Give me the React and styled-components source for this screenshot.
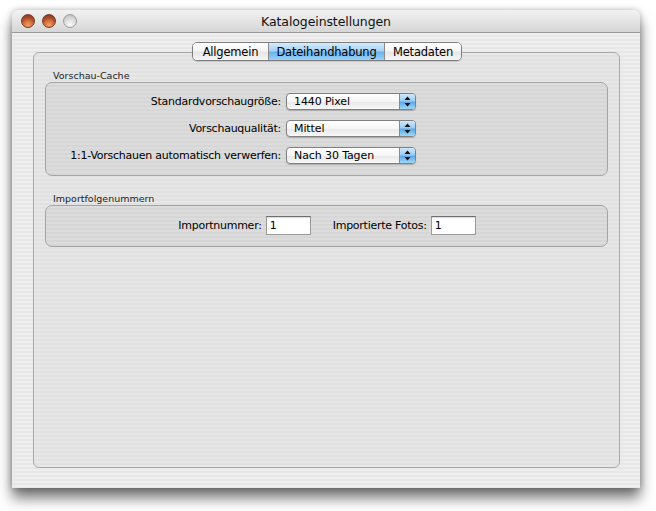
import React from "react";
import styled, { createGlobalStyle } from "styled-components";

const GlobalStyle = createGlobalStyle`
  html, body {
    margin: 0;
    padding: 0;
    background: #ffffff;
  }
  body {
    font-family: "DejaVu Sans", "Liberation Sans", sans-serif;
    color: #000;
  }
`;

const tabs = [
  { label: "Allgemein", width: 75 },
  { label: "Dateihandhabung", width: 116, active: true },
  { label: "Metadaten", width: 77 },
];

const previewRows = [
  { label: "Standardvorschaugröße:", value: "1440 Pixel" },
  { label: "Vorschauqualität:", value: "Mittel" },
  { label: "1:1-Vorschauen automatisch verwerfen:", value: "Nach 30 Tagen" },
];

const ArrowIcon = () => (
  <svg width="7" height="11" viewBox="0 0 7 11">
    <path d="M3.5 0.5 L6.5 4 L0.5 4 Z" fill="#111" />
    <path d="M3.5 10.5 L6.5 7 L0.5 7 Z" fill="#111" />
  </svg>
);

export default function App() {
  return (
    <>
      <GlobalStyle />
      <Page>
        <Window>
          <TitleBar>
            <Lights>
              <Light color="copper" />
              <Light color="copper" />
              <Light color="gray" />
            </Lights>
            <Title>Katalogeinstellungen</Title>
          </TitleBar>
          <Body>
            <TabView>
              <TabRow>
                <Segmented>
                  {tabs.map((t) => (
                    <Segment key={t.label} $w={t.width} $active={t.active}>
                      {t.label}
                    </Segment>
                  ))}
                </Segmented>
              </TabRow>
              <TabBox>
                <GroupLabel>Vorschau-Cache</GroupLabel>
                <GroupBox>
                  <FormGrid>
                    {previewRows.map((r) => (
                      <React.Fragment key={r.label}>
                        <FieldLabel>{r.label}</FieldLabel>
                        <Popup>
                          <PopupText>{r.value}</PopupText>
                          <PopupArrow>
                            <ArrowIcon />
                          </PopupArrow>
                        </Popup>
                      </React.Fragment>
                    ))}
                  </FormGrid>
                </GroupBox>

                <GroupLabel $second>Importfolgenummern</GroupLabel>
                <GroupBox>
                  <InlineRow>
                    <InlineField>
                      <FieldLabel>Importnummer:</FieldLabel>
                      <TextField>1</TextField>
                    </InlineField>
                    <InlineField>
                      <FieldLabel>Importierte Fotos:</FieldLabel>
                      <TextField>1</TextField>
                    </InlineField>
                  </InlineRow>
                </GroupBox>
              </TabBox>
            </TabView>
          </Body>
        </Window>
      </Page>
    </>
  );
}

const Page = styled.div`
  width: 656px;
  height: 511px;
  padding: 10px 0 0 12px;
  box-sizing: border-box;
`;

const Window = styled.div`
  width: 628px;
  height: 478px;
  border-radius: 6px 6px 0 0;
  background: #ededed;
  box-shadow: 0 10px 14px rgba(0, 0, 0, 0.55), 0 0 6px rgba(0, 0, 0, 0.25);
  display: flex;
  flex-direction: column;
  overflow: hidden;
`;

const TitleBar = styled.div`
  height: 22px;
  flex: none;
  position: relative;
  display: flex;
  align-items: center;
  justify-content: center;
  background: linear-gradient(#f2f2f2, #e4e4e4 50%, #d6d6d6);
  border-bottom: 1px solid #9a9a9a;
  border-radius: 6px 6px 0 0;
`;

const Lights = styled.div`
  position: absolute;
  left: 9px;
  top: 4px;
  display: flex;
  gap: 7px;
`;

const Light = styled.div`
  width: 14px;
  height: 14px;
  border-radius: 50%;
  box-sizing: border-box;
  border: 1px solid ${(p) => (p.color === "copper" ? "#7a3a22" : "#9c9c9c")};
  background: ${(p) =>
    p.color === "copper"
      ? "radial-gradient(circle at 50% 85%, #f2a06a 0%, #d7743f 35%, #a44a2a 65%, #7c3522 100%)"
      : "radial-gradient(circle at 50% 80%, #fafafa 0%, #dcdcdc 50%, #b8b8b8 100%)"};
`;

const Title = styled.div`
  font-family: "DejaVu Sans", sans-serif;
  font-size: 12.5px;
  color: #111;
  letter-spacing: -0.1px;
`;

const Body = styled.div`
  flex: 1;
  padding: 9px 20px 20px 21px;
  background: repeating-linear-gradient(
    to bottom,
    #eeeeee 0px,
    #eeeeee 2px,
    #e7e7e7 2px,
    #e7e7e7 4px
  );
  display: flex;
  flex-direction: column;
`;

const TabView = styled.div`
  flex: 1;
  display: flex;
  flex-direction: column;
`;

const TabRow = styled.div`
  display: flex;
  justify-content: center;
  position: relative;
  z-index: 1;
  padding-left: 1px;
`;

const Segmented = styled.div`
  display: flex;
  height: 17px;
  border: 1px solid #7e7e7e;
  border-radius: 5px;
  overflow: hidden;
  box-shadow: 0 1px 1px rgba(0, 0, 0, 0.15);
`;

const Segment = styled.div`
  width: ${(p) => p.$w}px;
  display: flex;
  align-items: center;
  justify-content: center;
  font-size: 11.5px;
  letter-spacing: -0.2px;
  color: #000;
  box-sizing: border-box;
  border-left: 1px solid #8a8a8a;
  &:first-child {
    border-left: none;
  }
  background: ${(p) =>
    p.$active
      ? "linear-gradient(#d3ebfc, #a7d3f6 45%, #6bb3ec 55%, #9ad3f8)"
      : "linear-gradient(#ffffff, #f4f4f4 45%, #e6e6e6 55%, #f6f6f6)"};
`;

const TabBox = styled.div`
  flex: 1;
  margin-top: -9px;
  padding: 17px 11px 0 11px;
  border: 1px solid #a9a9a9;
  border-radius: 6px;
  background: repeating-linear-gradient(
    to bottom,
    #e7e7e7 0px,
    #e7e7e7 2px,
    #e1e1e1 2px,
    #e1e1e1 4px
  );
`;

const GroupLabel = styled.div`
  font-size: 9.5px;
  color: #222;
  padding-left: 8px;
  height: 12px;
  line-height: 12px;
  margin-top: ${(p) => (p.$second ? "17px" : "0")};
`;

const GroupBox = styled.div`
  border: 1px solid #a4a4a4;
  border-radius: 7px;
  padding: 10px 0 11px;
  background: repeating-linear-gradient(
    to bottom,
    #dcdcdc 0px,
    #dcdcdc 2px,
    #d6d6d6 2px,
    #d6d6d6 4px
  );
`;

const FormGrid = styled.div`
  display: grid;
  grid-template-columns: 235px 130px;
  column-gap: 5px;
  row-gap: 10px;
  align-items: center;
`;

const FieldLabel = styled.div`
  font-size: 11px;
  letter-spacing: -0.25px;
  text-align: right;
  white-space: nowrap;
  color: #000;
`;

const Popup = styled.div`
  height: 17px;
  display: flex;
  box-sizing: border-box;
  border: 1px solid #808080;
  border-radius: 4px;
  overflow: hidden;
  background: linear-gradient(#ffffff, #f6f6f6 50%, #e9e9e9 55%, #f8f8f8);
  box-shadow: 0 1px 1px rgba(0, 0, 0, 0.2);
`;

const PopupText = styled.div`
  flex: 1;
  font-size: 11px;
  letter-spacing: -0.1px;
  padding-left: 7px;
  display: flex;
  align-items: center;
`;

const PopupArrow = styled.div`
  width: 15px;
  display: flex;
  align-items: center;
  justify-content: center;
  border-left: 1px solid #6f8fab;
  background: linear-gradient(#cfe8fb, #9ccdf5 45%, #5fa9e6 55%, #9fd8fb);
`;

const InlineRow = styled.div`
  display: flex;
  justify-content: center;
  gap: 22px;
  padding-left: 1px;
`;

const InlineField = styled.div`
  display: flex;
  align-items: center;
  gap: 4px;
`;

const TextField = styled.div`
  width: 45px;
  height: 19px;
  box-sizing: border-box;
  background: #fff;
  border: 1px solid #9a9a9a;
  border-top-color: #6e6e6e;
  box-shadow: inset 0 1px 1px rgba(0, 0, 0, 0.15);
  font-size: 11px;
  padding-left: 3px;
  display: flex;
  align-items: center;
`;
